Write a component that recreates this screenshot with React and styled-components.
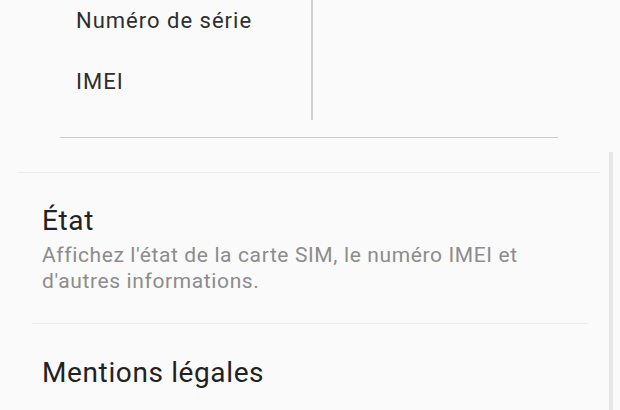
import styled, { createGlobalStyle } from "styled-components";

const Global = createGlobalStyle`
  html, body {
    margin: 0;
    padding: 0;
    background: #fafafa;
    font-family: Roboto, "Noto Sans", sans-serif;
  }
`;

const Screen = styled.div`
  position: relative;
  width: 620px;
  height: 410px;
  overflow: hidden;
  background: #fafafa;
`;

const InfoTable = styled.div`
  display: grid;
  grid-template-columns: 253px 1fr;
  margin: 0 62px 0 60px;
  padding-bottom: 17px;
  border-bottom: 1px solid #cccccc;
`;

const LabelCol = styled.div`
  box-sizing: border-box;
  display: flex;
  flex-direction: column;
  padding: 6px 0 0 16px;
  height: 120px;
  border-right: 2px solid #cfcfcf;
`;

const Label = styled.div`
  font-size: 22px;
  letter-spacing: 1px;
  color: #2e2e2e;
  height: 61px;
  line-height: 30px;
  flex-shrink: 0;
`;

const ValueCol = styled.div``;

const Section = styled.div`
  margin-top: 34px;
  border-top: 1px solid #ededed;
  margin-left: 18px;
  margin-right: 20px;
`;

const Item = styled.div`
  padding: ${(p) => p.pad || "31px 24px 29px"};
`;

const Title = styled.div`
  font-size: 28px;
  letter-spacing: 0.62px;
  color: #222;
  line-height: 34px;
`;

const Summary = styled.div`
  font-size: 21px;
  letter-spacing: 0.62px;
  color: #8c8c8c;
  line-height: 26px;
  margin-top: 4px;
`;

const Divider = styled.div`
  height: 1px;
  background: #ebebeb;
  margin: 0 12px 0 14px;
`;

const ScrollBar = styled.div`
  position: absolute;
  right: 7px;
  top: 152px;
  bottom: 0;
  width: 4px;
  background: #e6e6e6;
`;

export default function App() {
  return (
    <Screen>
      <Global />
      <InfoTable>
        <LabelCol>
          <Label>Numéro de série</Label>
          <Label>IMEI</Label>
        </LabelCol>
        <ValueCol />
      </InfoTable>
      <Section>
        <Item>
          <Title>État</Title>
          <Summary>
            Affichez l'état de la carte SIM, le numéro IMEI et
            <br />
            d'autres informations.
          </Summary>
        </Item>
        <Divider />
        <Item pad="32px 24px">
          <Title>Mentions légales</Title>
        </Item>
      </Section>
      <ScrollBar />
    </Screen>
  );
}
